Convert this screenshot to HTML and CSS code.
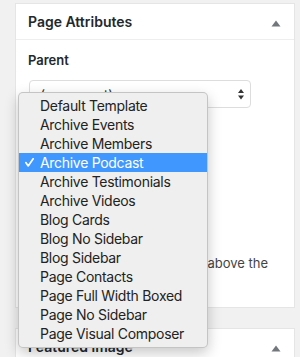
FILE: index.html
```html
<!DOCTYPE html>
<html>
<head>
<meta charset="utf-8">
<link rel="stylesheet" href="styles.css">
</head>
<body>
<div class="page">
  <div class="postbox">
    <div class="postbox-header">
      <h2>Page Attributes</h2>
      <svg class="toggle" width="10" height="7" viewBox="0 0 10 7"><path d="M5 0.5 L9.5 6.5 L0.5 6.5 Z" fill="#72777c"/></svg>
    </div>
    <div class="inside">
      <p class="label">Parent</p>
      <div class="select">
        <span>(no parent)</span>
        <svg class="arrows" width="6" height="11" viewBox="0 0 6 11"><path d="M3 0 L6 4 L0 4 Z M0 6.5 L6 6.5 L3 10.5 Z" fill="#333"/></svg>
      </div>
      <p class="help">Need help? Use the Help tab above the screen title.</p>
    </div>
  </div>
  <div class="postbox second">
    <div class="postbox-header">
      <h2>Featured image</h2>
      <svg class="toggle" width="10" height="7" viewBox="0 0 10 7"><path d="M5 0.5 L9.5 6.5 L0.5 6.5 Z" fill="#72777c"/></svg>
    </div>
  </div>
</div>

<ul class="menu">
  <li><span class="mark"></span>Default Template</li>
  <li><span class="mark"></span>Archive Events</li>
  <li><span class="mark"></span>Archive Members</li>
  <li class="selected"><span class="mark"><svg width="9" height="9" viewBox="0 0 9 9"><path d="M0.8 4.6 L3.2 7.9 L8.2 0.8" fill="none" stroke="#fff" stroke-width="1.7" stroke-linecap="round" stroke-linejoin="round"/></svg></span>Archive Podcast</li>
  <li><span class="mark"></span>Archive Testimonials</li>
  <li><span class="mark"></span>Archive Videos</li>
  <li><span class="mark"></span>Blog Cards</li>
  <li><span class="mark"></span>Blog No Sidebar</li>
  <li><span class="mark"></span>Blog Sidebar</li>
  <li><span class="mark"></span>Page Contacts</li>
  <li><span class="mark"></span>Page Full Width Boxed</li>
  <li><span class="mark"></span>Page No Sidebar</li>
  <li><span class="mark"></span>Page Visual Composer</li>
</ul>
</body>
</html>
```

FILE: styles.css
```css
html, body {
  margin: 0;
  padding: 0;
}
body {
  width: 300px;
  height: 357px;
  overflow: hidden;
  position: relative;
  background: #f1f1f1;
  font-family: Inter, "Liberation Sans", sans-serif;
  color: #444;
}
.page {
  padding: 3px 5px 0 15px;
}
.postbox {
  width: 280px;
  box-sizing: border-box;
  background: #fff;
  border: 1px solid #e5e5e5;
}
.postbox.second {
  margin-top: 20px;
}
.postbox-header {
  height: 35px;
  padding: 0 12px;
  display: flex;
  align-items: center;
  justify-content: space-between;
  border-bottom: 1px solid #eeeeee;
}
.postbox-header h2 {
  margin: 0;
  font-size: 14px;
  font-weight: 600;
  color: #23282d;
  line-height: 19px;
}
.toggle {
  margin-top: 3px;
  margin-right: 1px;
}
.inside {
  padding: 11px 12px 15px 12px;
}
.label {
  margin: 0;
  font-size: 13px;
  font-weight: 600;
  line-height: 19px;
  color: #23282d;
}
.select {
  margin: 10px 0 0 1px;
  width: 222px;
  height: 28px;
  box-sizing: border-box;
  border: 1px solid #dddddd;
  border-radius: 4px;
  padding: 0 6px 0 10px;
  display: flex;
  align-items: center;
  justify-content: space-between;
  font-size: 14px;
  color: #32373c;
}
.help {
  margin: 146px 0 0 0;
  font-size: 13px;
  line-height: 19px;
  color: #444;
}
.menu {
  position: absolute;
  left: 18px;
  top: 92px;
  width: 190px;
  height: 256px;
  box-sizing: border-box;
  margin: 0;
  padding: 3px 0 4px 0;
  list-style: none;
  background: #efefef;
  border: 1px solid rgba(0, 0, 0, 0.18);
  border-radius: 5px;
  box-shadow: 0 5px 14px rgba(0, 0, 0, 0.22);
  font-size: 14px;
  letter-spacing: -0.3px;
  color: #222;
}
.menu li {
  height: 19px;
  line-height: 19px;
  display: flex;
  align-items: center;
  white-space: nowrap;
}
.menu li.selected {
  background: #4098fe;
  color: #fff;
}
.mark {
  width: 21px;
  flex: none;
  display: flex;
  align-items: center;
  padding-left: 6px;
  box-sizing: border-box;
}
.mark svg {
  display: block;
}
```
